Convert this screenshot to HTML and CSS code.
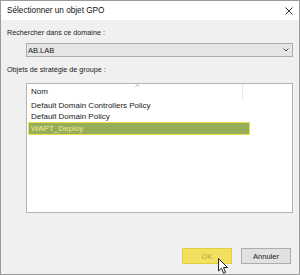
FILE: index.html
```html
<!DOCTYPE html>
<html lang="fr">
<head>
    <meta charset="UTF-8">
    <title>Sélectionner un objet GPO</title>
    <link rel="stylesheet" href="styles.css">
</head>
<body>
    <div class="dialog">
        <div class="titlebar">
            <span class="title">Sélectionner un objet GPO</span>
            <svg class="close" width="8" height="8" viewBox="0 0 8 8">
                <path d="M0.5 0.5 L7.5 7.5 M7.5 0.5 L0.5 7.5" stroke="#333" stroke-width="1"/>
            </svg>
        </div>

        <div class="content">
            <label class="field-label">Rechercher dans ce domaine :</label>
            <div class="combo">
                <span>AB.LAB</span>
                <svg width="6" height="4" viewBox="0 0 6 4">
                    <path d="M0.5 0.5 L3 3 L5.5 0.5" stroke="#555" fill="none" stroke-width="1"/>
                </svg>
            </div>

            <label class="field-label second">Objets de stratégie de groupe :</label>
            <div class="listview">
                <div class="list-header">
                    <div class="col-name">
                        Nom
                        <svg class="sort" width="5" height="3" viewBox="0 0 5 3">
                            <path d="M0.5 2.5 L2.5 0.5 L4.5 2.5" stroke="#999" fill="none" stroke-width="0.8"/>
                        </svg>
                    </div>
                </div>
                <div class="row">Default Domain Controllers Policy</div>
                <div class="row">Default Domain Policy</div>
                <div class="row selected">WAPT_Deploy</div>
            </div>
        </div>

        <div class="buttons">
            <button class="btn ok">OK</button>
            <button class="btn">Annuler</button>
        </div>

        <!-- pointeur de souris au-dessus du bouton OK -->
        <svg class="cursor" width="11" height="17" viewBox="0 0 11 17">
            <path d="M0.5 0.5 L0.5 13 L3.5 10.2 L5.6 15.3 L7.6 14.4 L5.5 9.5 L9.5 9.5 Z" fill="#fff" stroke="#222" stroke-width="1"/>
        </svg>
    </div>
</body>
</html>
```

FILE: styles.css
```css
html, body {
    margin: 0;
    padding: 0;
}
body {
    font-family: "Liberation Sans", Arial, sans-serif;
    font-size: 7.2px;
    color: #1a1a1a;
}
.dialog {
    position: relative;
    width: 300px;
    height: 275px;
    box-sizing: border-box;
    border: 1px solid #9b9b9b;
    background-color: #f0f0f0;
    display: flex;
    flex-direction: column;
}
.titlebar {
    height: 19px;
    background-color: #fff;
    display: flex;
    align-items: center;
    justify-content: space-between;
    padding: 0 6px 0 6px;
}
.title {
    font-size: 8.2px;
    color: #111;
}
.close {
    margin-top: 1px;
}
.content {
    flex: 1;
    display: flex;
    flex-direction: column;
    padding: 8px 6px 0 6px;
}
.field-label {
    height: 10px;
    line-height: 10px;
}
.field-label.second {
    margin-top: 8px;
}
.combo {
    margin: 5px 0 0 19px;
    height: 12px;
    border: 1px solid #adadad;
    background-color: #e5e5e5;
    display: flex;
    align-items: center;
    justify-content: space-between;
    padding: 0 3px 0 1px;
    font-size: 7.5px;
}
.listview {
    margin: 8px 0 0 19px;
    height: 128px;
    border: 1px solid #b4b4b4;
    background-color: #fff;
    font-size: 8px;
}
.list-header {
    height: 16px;
    display: flex;
}
.col-name {
    position: relative;
    width: 216px;
    border-right: 1px solid #e8e8e8;
    padding: 3px 0 0 4px;
    box-sizing: border-box;
}
.sort {
    position: absolute;
    left: 108px;
    top: 0px;
}
.row {
    height: 11px;
    line-height: 11px;
    padding-left: 4px;
    width: 217px;
    box-sizing: border-box;
}
.row.selected {
    margin-left: 1px;
    width: 222px;
    height: 13px;
    line-height: 11px;
    background-color: #95ae5a;
    border: 1px solid #f3dc4b;
    color: #f2ea8c;
    padding-left: 2px;
}
.buttons {
    display: flex;
    justify-content: flex-end;
    gap: 9px;
    padding: 0 8px 10px 0;
}
.btn {
    width: 50px;
    height: 16px;
    font-family: inherit;
    font-size: 7.5px;
    border: 1px solid #adadad;
    background-color: #e1e1e1;
    color: #1a1a1a;
    padding: 0;
}
.btn.ok {
    background-color: #f2e061;
    border-color: #e6cf3d;
    color: #b6a53d;
}
.cursor {
    position: absolute;
    left: 217px;
    top: 257px;
}
```
